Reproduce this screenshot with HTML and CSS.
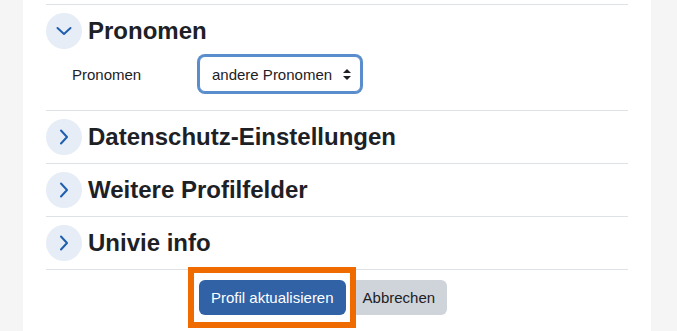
FILE: index.html
```html
<!DOCTYPE html>
<html lang="de">

<head>
    <meta charset="UTF-8">
    <link rel="stylesheet" href="styles.css">
    <title>Profil bearbeiten</title>
</head>

<body>
    <div id="page">
        <div id="main">
            <!-- Pronomen (ausgeklappt) -->
            <div class="section">
                <div class="section-head">
                    <span class="toggler">
                        <svg width="16" height="16" viewBox="0 0 16 16"><polyline points="1.5,5 8,11 14.5,5" /></svg>
                    </span>
                    <h3>Pronomen</h3>
                </div>
                <div class="form-row">
                    <label for="pronomen">Pronomen</label>
                    <div class="select">
                        <span id="pronomen">andere Pronomen</span>
                        <span class="arrows">
                            <svg width="8" height="11" viewBox="0 0 8 11"><polygon points="4,0 8,4 0,4" /><polygon points="0,7 8,7 4,11" /></svg>
                        </span>
                    </div>
                </div>
            </div>

            <div class="section">
                <div class="section-head">
                    <span class="toggler">
                        <svg width="16" height="16" viewBox="0 0 16 16"><polyline points="5,1.5 11,8 5,14.5" /></svg>
                    </span>
                    <h3>Datenschutz-Einstellungen</h3>
                </div>
            </div>

            <div class="section">
                <div class="section-head">
                    <span class="toggler">
                        <svg width="16" height="16" viewBox="0 0 16 16"><polyline points="5,1.5 11,8 5,14.5" /></svg>
                    </span>
                    <h3>Weitere Profilfelder</h3>
                </div>
            </div>

            <div class="section">
                <div class="section-head">
                    <span class="toggler">
                        <svg width="16" height="16" viewBox="0 0 16 16"><polyline points="5,1.5 11,8 5,14.5" /></svg>
                    </span>
                    <h3>Univie info</h3>
                </div>
            </div>

            <div class="actions">
                <button class="btn btn-primary" type="button">Profil aktualisieren</button>
                <button class="btn btn-secondary" type="button">Abbrechen</button>
            </div>
        </div>

        <!-- Markierung -->
        <div class="highlight"></div>
    </div>
</body>

</html>
```

FILE: styles.css
```css
@charset "UTF-8";

/* ========BASIC======== */
body {
    margin: 0;
    padding: 0;
    font-family: "Liberation Sans", Arial, sans-serif;
    font-size: 15px;
    color: #1d2125;
    background: #f5f5f5;
}

h3 {
    margin: 0;
}

/* ========LAYOUT======== */
#page {
    position: relative;
    height: 331px;
    overflow: hidden;
}

#main {
    width: 582px;
    margin-left: 23px;
    padding: 4px 23px 20px 23px;
    background: #fff;
    min-height: 331px;
}

/* ========SECTIONS======== */
.section {
    border-top: 1px solid #dee2e6;
}

.section-head {
    display: flex;
    align-items: center;
    gap: 6px;
    padding: 8px 0;
}

.section-head h3 {
    font-size: 24px;
    font-weight: bold;
    line-height: 1.2;
    color: #1d2125;
}

.toggler {
    display: flex;
    align-items: center;
    justify-content: center;
    width: 36px;
    height: 36px;
    border-radius: 50%;
    background: #e6edf6;
}

.toggler svg polyline {
    fill: none;
    stroke: #1f5fae;
    stroke-width: 2;
    stroke-linecap: round;
    stroke-linejoin: round;
}

/* ========FORM ROW======== */
.form-row {
    display: flex;
    align-items: center;
    margin: -1px 0 18px 26px;
}

.form-row label {
    width: 127px;
}

.select {
    display: flex;
    align-items: center;
    box-sizing: border-box;
    width: 162px;
    height: 36px;
    padding: 0 9px 0 12px;
    border: 1px solid #5a8dcb;
    border-radius: 6px;
    box-shadow: 0 0 0 2px #5a8dcb;
    background: #fff;
    white-space: nowrap;
}

.select .arrows {
    display: flex;
    margin-left: auto;
}

.select .arrows polygon {
    fill: #1d2125;
}

/* ========BUTTONS======== */
.actions {
    display: flex;
    gap: 5px;
    padding: 10px 0 0 153px;
    border-top: 1px solid #dee2e6;
}

.btn {
    height: 35px;
    padding: 0 12px;
    font-family: "Liberation Sans", Arial, sans-serif;
    font-size: 15px;
    border: 0;
    border-radius: 6px;
}

.btn-primary {
    padding: 0 12px;
    color: #fff;
    background: #3062a5;
}

.btn-secondary {
    color: #1d2125;
    background: #ced4da;
}

.highlight {
    position: absolute;
    left: 188px;
    top: 267px;
    width: 156px;
    height: 49px;
    border: 6px solid #ef6b00;
}
```
